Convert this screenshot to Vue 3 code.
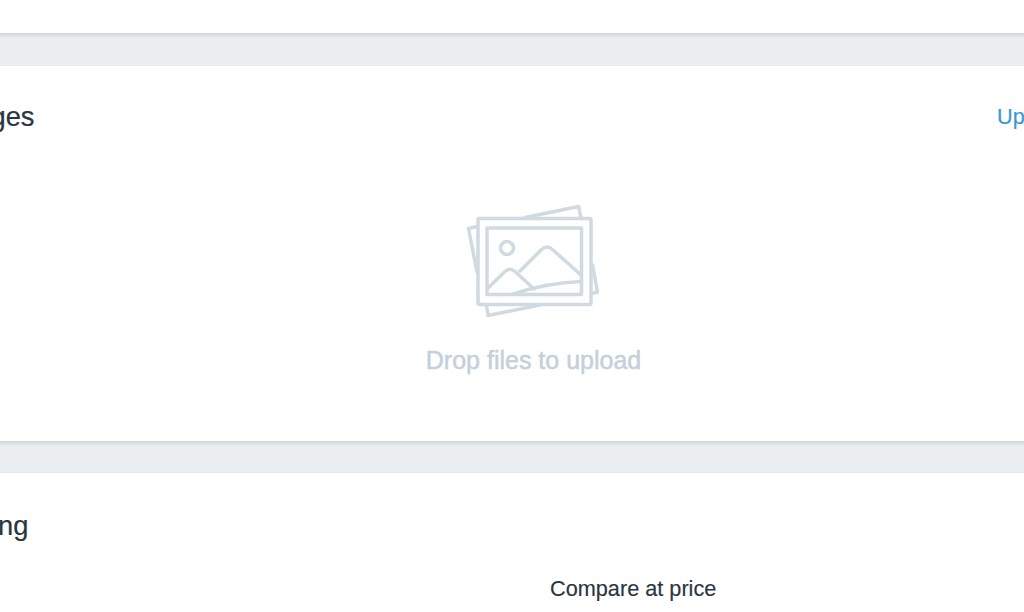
<script setup>
const title = 'Images'
</script>

<template>
  <div class="viewport">
    <div class="page">
      <section class="card top-card"></section>
      <section class="card images-card">
        <header class="card-header">
          <h2>{{ title }}</h2>
          <a class="link">Upload images</a>
        </header>
        <div class="dropzone">
          <svg class="drop-icon" width="132" height="112" viewBox="468 205 132 112" fill="none">
            <g class="strokes">
              <path d="M477 226.500 468.500 228.500 477 272M486.500 305 488 315.500 540 305M525 217.500 578.500 206.500 581 217.500M592.500 265 597.500 292 591.500 293.500" />
              <rect x="478" y="218.500" width="113" height="86" rx="1.500" />
              <rect x="487" y="228" width="94.500" height="66.500" />
              <circle cx="507" cy="248" r="6.500" />
              <path d="M488 288 505 271.500Q510 267 515 271.500L534 289" />
              <path d="M520 271 541 250Q547 244 553 250L581 275" />
              <path d="M512 294.500Q545 283 581 281.500" />
            </g>
          </svg>
          <p class="drop-text">Drop files to upload</p>
        </div>
      </section>
      <section class="card pricing-card">
        <h2>Pricing</h2>
        <div class="price-grid">
          <label></label>
          <label>Compare at price</label>
        </div>
      </section>
    </div>
  </div>
</template>

<style>
html, body { margin: 0; background: #ebeef0; overflow: hidden; }
</style>

<style scoped>
.viewport {
  width: 1024px;
  height: 612px;
  overflow: hidden;
  font-family: "Liberation Sans", Arial, sans-serif;
}
.page {
  width: 1177px;
  margin-left: -55px;
  display: flex;
  flex-direction: column;
  gap: 32px;
}
.card {
  background: #fff;
  box-shadow: 0 2px 4px rgba(33, 43, 54, 0.16);
}
.top-card { height: 33px; }
.images-card {
  height: 375px;
  margin-top: 1px;
  position: relative;
}
.card-header {
  display: flex;
  justify-content: space-between;
  align-items: center;
  height: 101px;
}
h2 {
  margin: 0;
  font-size: 27.300px;
  font-weight: 400;
  line-height: 32px;
  color: #2a3540;
  -webkit-text-stroke: 0.2px #2a3540;
}
.link {
  font-size: 21.700px;
  color: #3d97d3;
  width: 180px;
  flex: none;
  margin-right: -55px;
  -webkit-text-stroke: 0.2px #3d97d3;
}
.dropzone {
  display: flex;
  flex-direction: column;
  align-items: center;
  margin-top: 38px;
}
.drop-icon { display: block; overflow: visible; }
.strokes {
  stroke: #d0dae1;
  stroke-width: 3.500;
  stroke-linejoin: round;
  stroke-linecap: round;
}
.drop-text {
  margin: 28px 0 0;
  font-size: 25px;
  line-height: 30px;
  color: #c4d0da;
  -webkit-text-stroke: 0.5px #c4d0da;
}
.pricing-card {
  height: 180px;
  padding-top: 37px;
  box-sizing: border-box;
}
.price-grid {
  display: grid;
  grid-template-columns: 605px 1fr;
  margin-top: 34px;
}
.price-grid label {
  font-size: 21.700px;
  line-height: 26px;
  color: #2a3540;
  -webkit-text-stroke: 0.15px #2a3540;
}
</style>
